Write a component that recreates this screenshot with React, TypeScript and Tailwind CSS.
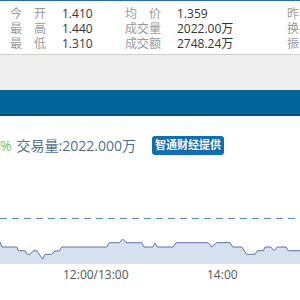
const font = { fontFamily: '"Open Sans", "Noto Sans CJK SC", sans-serif' };

const pts: [number, number][] = [
  [0, 242], [2, 247], [16.7, 247], [18.3, 250.7], [25, 250.7], [27.3, 254.3], [30, 254.3],
  [33.3, 250.7], [36.7, 250.7], [42.7, 259], [45, 254.3], [51.7, 254.3], [55, 251], [59.3, 251],
  [61.7, 247], [106.7, 247], [109.3, 242.7], [119.3, 242.7], [122.7, 239], [126, 242.7],
  [141.7, 242.7], [144, 247], [152.7, 247], [155, 243.3], [157.3, 247], [173.3, 247],
  [176, 242.7], [208.3, 242.7], [211.7, 247], [216.7, 242.7], [230, 242.7], [232.7, 247],
  [241.7, 247], [246.7, 254.3], [255, 254.3], [257.3, 250.7], [263.3, 250.7], [265, 247],
  [270.7, 247], [274, 250.7], [277.3, 247], [286, 247], [288.3, 250.7], [300, 250.7],
];

const line = pts.map(([x, y]) => `${x},${y}`).join(' ');
const area = `${line} 300,264 0,264`;

const rows = [
  ['今', '开', '1.410', '均', '价', '1.359', '昨'],
  ['最', '高', '1.440', '成交量', '', '2022.00万', '换手'],
  ['最', '低', '1.310', '成交额', '', '2748.24万', '振'],
];

export default function App() {
  return (
    <div className="w-[300px] h-[300px] overflow-hidden bg-white flex flex-col" style={font}>
      <div className="h-[55px] border-t border-[#2c6f9c] border-b border-b-[#cfcfcf] pt-[5px] shrink-0">
        {rows.map((r, i) => (
          <div key={i} className="flex text-[12px] leading-[15px] whitespace-nowrap">
            <span className="w-[62px] pl-[10px] shrink-0">
              <span className="w-[36px] flex justify-between text-[#9a9a9a]">
                <span>{r[0]}</span>
                <span>{r[1]}</span>
              </span>
            </span>
            <span className="w-[63px] shrink-0 text-[#333]">{r[2]}</span>
            <span className="w-[52px] shrink-0">
              <span className="w-[36px] flex justify-between text-[#9a9a9a]">
                <span>{r[3]}</span>
                {r[4] && <span>{r[4]}</span>}
              </span>
            </span>
            <span className="w-[110px] shrink-0 text-[#333]">{r[5]}</span>
            <span className="text-[#9a9a9a]">{r[6]}</span>
          </div>
        ))}
      </div>
      <div className="h-[35px] bg-[#eeeeee] shrink-0" />
      <div className="h-[26px] bg-[#03669a] border-b-2 border-[#024d77] shrink-0" />
      <div className="mt-[19px] h-[21px] flex items-center whitespace-nowrap shrink-0">
        <span className="text-[14px] text-[#72bf5a]">%</span>
        <span className="ml-[5px] text-[14px] text-[#4e6f93]">交易量:2022.000万</span>
        <span className="ml-[16px] h-[19px] px-[3px] flex items-center rounded-[3px] bg-[#136db1] text-white text-[11px] font-bold">
          智通财经提供
        </span>
      </div>
      <svg width="300" height="110" className="shrink-0">
        <g transform="translate(0,-156)">
          <line x1="0" y1="218.5" x2="300" y2="218.5" stroke="#5a8fc6" strokeWidth="1" strokeDasharray="7 5" />
          <polygon points={area} fill="#d6e0ee" />
          <polyline points={line} fill="none" stroke="#5877a3" strokeWidth="1" />
        </g>
      </svg>
      <div className="h-[18px] relative text-[12px] leading-[18px] text-[#555] whitespace-nowrap">
        <span className="absolute left-[63px]">12:00/13:00</span>
        <span className="absolute left-[207px]">14:00</span>
      </div>
    </div>
  );
}
